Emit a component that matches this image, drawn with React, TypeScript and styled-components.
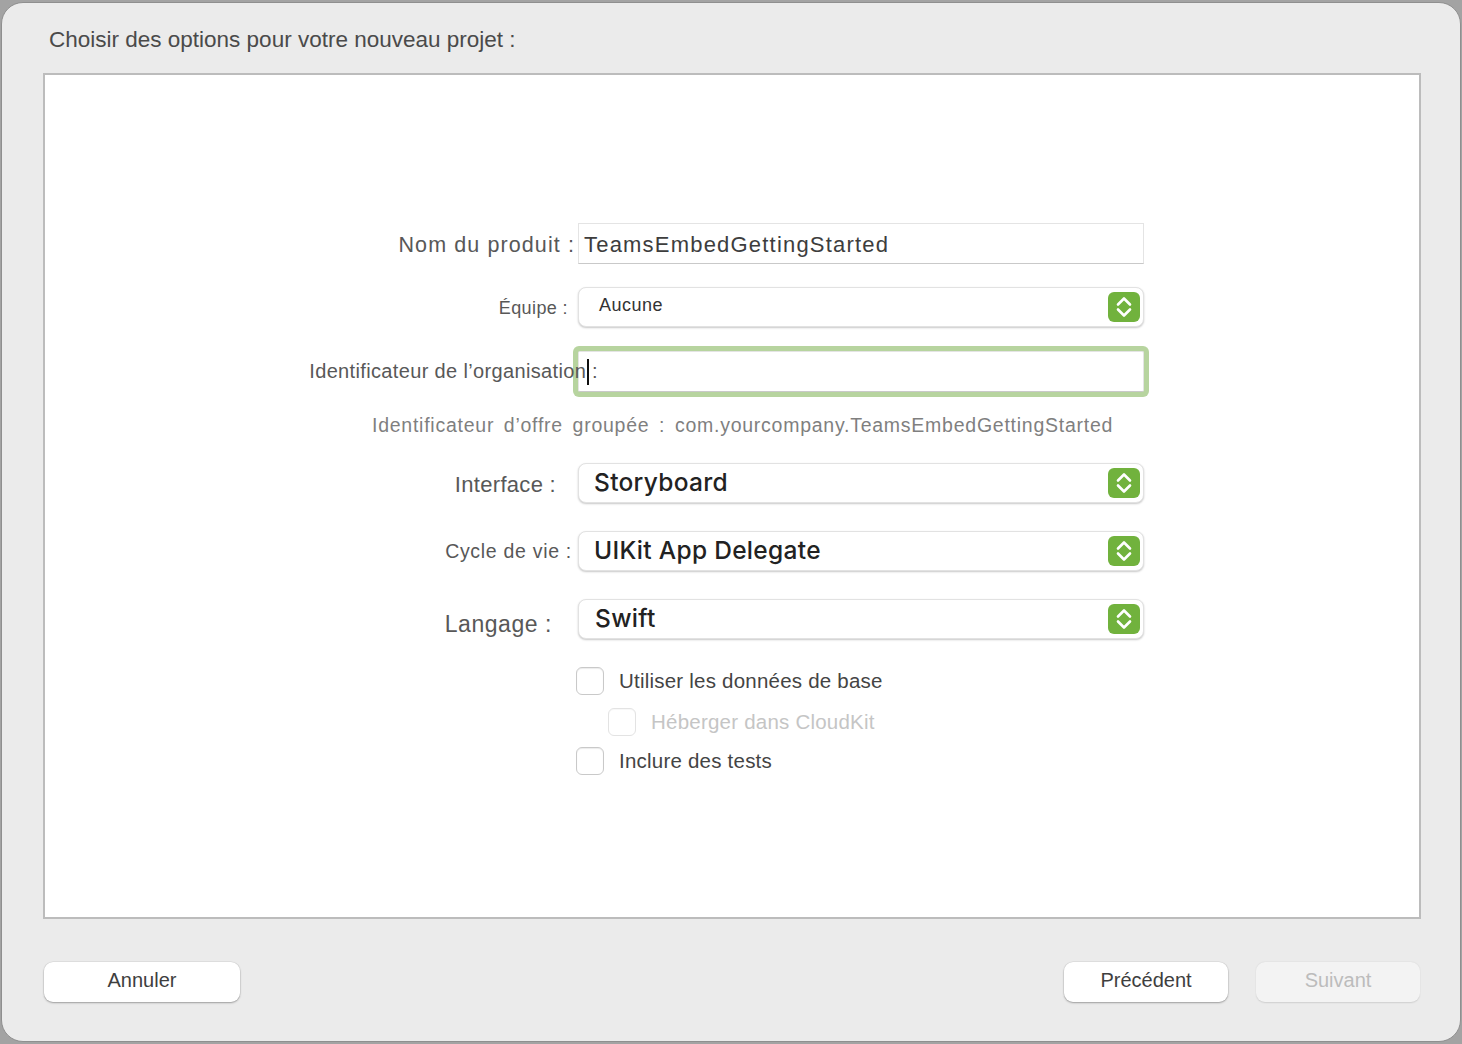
import React from "react";
import styled, { createGlobalStyle } from "styled-components";

const Global = createGlobalStyle`
  html, body { margin: 0; padding: 0; }
  body {
    background: #a3a3a3;
    font-family: "Liberation Sans", Arial, sans-serif;
    width: 1462px;
    height: 1044px;
    overflow: hidden;
  }
`;

const Window = styled.div`
  box-sizing: border-box;
  margin: 2px 1px 0 1px;
  width: 1460px;
  height: 1040px;
  background: #ebebeb;
  border: 1px solid #8f8f8f;
  border-radius: 22px;
  display: flex;
  flex-direction: column;
  padding: 0 39px 0 41px;
`;

const Title = styled.h1`
  box-sizing: border-box;
  margin: 0;
  height: 70px;
  display: flex;
  align-items: center;
  padding: 3px 0 0 6px;
  font-size: 22.5px;
  font-weight: 400;
  color: #4a4a4a;
  letter-spacing: 0;
`;

const Panel = styled.div`
  box-sizing: border-box;
  height: 846px;
  background: #ffffff;
  border: 2px solid #bcbcbc;
  padding-top: 148px;
  display: flex;
  flex-direction: column;
`;

const Row = styled.div<{ $mt: number }>`
  display: grid;
  grid-template-columns: 533px 566px;
  margin-top: ${(p) => p.$mt}px;
  align-items: center;
`;

const Label = styled.label<{ $size: number; $pr: number; $dy?: number; $ls?: number }>`
  position: relative;
  z-index: 1;
  justify-self: end;
  white-space: nowrap;
  font-size: ${(p) => p.$size}px;
  letter-spacing: ${(p) => p.$ls ?? 0.4}px;
  color: #585858;
  margin-right: ${(p) => p.$pr}px;
  padding-top: ${(p) => p.$dy ?? 0}px;
`;

const TextField = styled.div<{ $focused?: boolean }>`
  box-sizing: border-box;
  height: 41px;
  background: #fff;
  border: 1px solid #e4e4e4;
  border-bottom-color: #c9c9c9;
  box-shadow: ${(p) => (p.$focused ? "0 0 0 5px #b7d49f" : "none")};
  border-radius: ${(p) => (p.$focused ? "2px" : "0")};
  display: flex;
  align-items: center;
  padding: 3px 0 0 5px;
  font-size: 22px;
  letter-spacing: 1.2px;
  color: #3d3d3d;
`;

const Caret = styled.span`
  display: inline-block;
  width: 2px;
  height: 26px;
  background: #111;
  margin: -3px 0 0 3px;
`;

const Popup = styled.div<{ $pl: number }>`
  box-sizing: border-box;
  height: 40px;
  background: #fff;
  border-radius: 8px;
  border: 1px solid #e2e2e2;
  box-shadow: 0 1px 2px rgba(0, 0, 0, 0.22);
  display: flex;
  align-items: center;
  justify-content: space-between;
  padding: 0 3px 0 ${(p) => p.$pl}px;
`;

const PopupText = styled.span<{ $big?: boolean }>`
  font-family: ${(p) => (p.$big ? `"Inter", "Liberation Sans", sans-serif` : `"Liberation Sans", Arial, sans-serif`)};
  font-size: ${(p) => (p.$big ? "24.5px" : "18px")};
  font-weight: ${(p) => (p.$big ? 500 : 400)};
  letter-spacing: ${(p) => (p.$big ? "0.3px" : "0.5px")};
  color: ${(p) => (p.$big ? "#222" : "#333")};
  margin-top: -3px;
`;

const Stepper = styled.span`
  width: 32px;
  height: 30px;
  border-radius: 6px;
  background: #71b23d;
  display: flex;
  align-items: center;
  justify-content: center;
`;

const Info = styled.div`
  margin-top: 19px;
  height: 28px;
  display: flex;
  align-items: center;
  padding-left: 327px;
  font-size: 19.5px;
  letter-spacing: 0.75px;
  word-spacing: 3.5px;
  color: #7f7f7f;
  white-space: nowrap;
`;

const CheckRow = styled.div<{ $mt: number; $indent: number; $disabled?: boolean }>`
  display: flex;
  align-items: center;
  gap: 15px;
  margin-top: ${(p) => p.$mt}px;
  padding-left: ${(p) => 531 + p.$indent}px;
  font-size: 20.5px;
  letter-spacing: 0.22px;
  color: ${(p) => (p.$disabled ? "#c5c5c5" : "#444")};
`;

const Box = styled.span<{ $disabled?: boolean }>`
  box-sizing: border-box;
  width: 28px;
  height: 28px;
  border-radius: 6px;
  background: #fff;
  border: 1px solid ${(p) => (p.$disabled ? "#e3e3e3" : "#c9c9c9")};
  box-shadow: inset 0 1px 1px rgba(0, 0, 0, ${(p) => (p.$disabled ? 0.03 : 0.08)});
`;

const Footer = styled.div`
  display: flex;
  align-items: center;
  margin-top: 43px;
  padding: 0 1px 0 1px;
`;

const Button = styled.button<{ $w: number; $disabled?: boolean }>`
  box-sizing: border-box;
  width: ${(p) => p.$w}px;
  height: 40px;
  border: none;
  border-radius: 9px;
  background: ${(p) => (p.$disabled ? "#f3f3f3" : "#fff")};
  box-shadow: ${(p) =>
    p.$disabled ? "0 0.5px 1.5px rgba(0,0,0,0.12)" : "0 1px 2px rgba(0,0,0,0.3), 0 0 0 0.5px rgba(0,0,0,0.08)"};
  font-family: "Liberation Sans", Arial, sans-serif;
  font-size: 20px;
  color: ${(p) => (p.$disabled ? "#bcbcbc" : "#3e3e3e")};
  padding: 0 0 3px 0;
`;

const Spacer = styled.div`
  flex: 1;
`;

const ButtonGap = styled.div`
  width: 28px;
`;

const StepIcon = () => (
  <Stepper>
    <svg width="18" height="24" viewBox="0 0 18 24" fill="none">
      <path d="M3 9.5 L9 3.5 L15 9.5" stroke="#fff" strokeWidth="2.6" strokeLinecap="round" strokeLinejoin="round" />
      <path d="M3 14.5 L9 20.5 L15 14.5" stroke="#fff" strokeWidth="2.6" strokeLinecap="round" strokeLinejoin="round" />
    </svg>
  </Stepper>
);

export default function App() {
  return (
    <>
      <Global />
      <Window>
        <Title>Choisir des options pour votre nouveau projet :</Title>
        <Panel>
          <Row $mt={0}>
            <Label $size={21.5} $pr={3} $ls={1.1} $dy={3}>Nom du produit :</Label>
            <TextField>TeamsEmbedGettingStarted</TextField>
          </Row>
          <Row $mt={23}>
            <Label $size={18} $pr={10} $dy={2}>Équipe :</Label>
            <Popup $pl={20}>
              <PopupText>Aucune</PopupText>
              <StepIcon />
            </Popup>
          </Row>
          <Row $mt={24}>
            <Label $size={20} $pr={-20} $ls={0.35}>Identificateur de l’organisation :</Label>
            <TextField $focused>
              <Caret />
            </TextField>
          </Row>
          <Info>Identificateur d’offre groupée : com.yourcompany.TeamsEmbedGettingStarted</Info>
          <Row $mt={24}>
            <Label $size={22} $pr={22} $dy={4} $ls={0.3}>Interface :</Label>
            <Popup $pl={15}>
              <PopupText $big>Storyboard</PopupText>
              <StepIcon />
            </Popup>
          </Row>
          <Row $mt={28}>
            <Label $size={19.5} $pr={6} $dy={1} $ls={0.7}>Cycle de vie :</Label>
            <Popup $pl={15}>
              <PopupText $big>UIKit App Delegate</PopupText>
              <StepIcon />
            </Popup>
          </Row>
          <Row $mt={28}>
            <Label $size={23} $pr={26} $dy={10} $ls={0.55}>Langage :</Label>
            <Popup $pl={16}>
              <PopupText $big>Swift</PopupText>
              <StepIcon />
            </Popup>
          </Row>
          <CheckRow $mt={28} $indent={0}>
            <Box />
            <span>Utiliser les données de base</span>
          </CheckRow>
          <CheckRow $mt={13} $indent={32} $disabled>
            <Box $disabled />
            <span>Héberger dans CloudKit</span>
          </CheckRow>
          <CheckRow $mt={11} $indent={0}>
            <Box />
            <span>Inclure des tests</span>
          </CheckRow>
        </Panel>
        <Footer>
          <Button $w={196}>Annuler</Button>
          <Spacer />
          <Button $w={164}>Précédent</Button>
          <ButtonGap />
          <Button $w={164} $disabled>Suivant</Button>
        </Footer>
      </Window>
    </>
  );
}
